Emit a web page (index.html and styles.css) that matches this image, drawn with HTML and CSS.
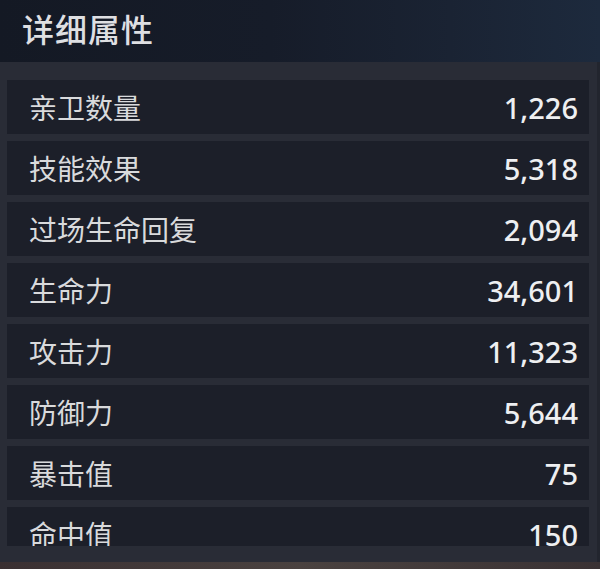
FILE: index.html
```html
<!DOCTYPE html>
<html lang="zh-CN">
<head>
<meta charset="utf-8">
<title>详细属性</title>
<link rel="stylesheet" href="styles.css">
</head>
<body>
<div class="screen">
  <header class="header">
    <h1 class="title">详细属性</h1>
  </header>
  <section class="panel">
    <div class="list">
      <div class="row"><span class="label">亲卫数量</span><span class="value">1,226</span></div>
      <div class="row"><span class="label">技能效果</span><span class="value">5,318</span></div>
      <div class="row"><span class="label">过场生命回复</span><span class="value">2,094</span></div>
      <div class="row"><span class="label">生命力</span><span class="value">34,601</span></div>
      <div class="row"><span class="label">攻击力</span><span class="value">11,323</span></div>
      <div class="row"><span class="label">防御力</span><span class="value">5,644</span></div>
      <div class="row"><span class="label">暴击值</span><span class="value">75</span></div>
      <div class="row"><span class="label">命中值</span><span class="value">150</span></div>
    </div>
  </section>
  <div class="bottom"></div>
</div>
</body>
</html>
```
FILE: styles.css
```css
* { box-sizing: border-box; }
html, body {
  margin: 0;
  padding: 0;
  background: #3b3436;
}
.screen {
  width: 600px;
  height: 569px;
  display: flex;
  flex-direction: column;
  overflow: hidden;
  font-family: "Noto Sans CJK SC", "Noto Sans", sans-serif;
}
.header {
  height: 62px;
  flex: 0 0 62px;
  display: flex;
  align-items: center;
  padding-left: 22px;
  background: linear-gradient(90deg, #141924 0%, #161c29 45%, #1a2333 75%, #1d2a3d 100%);
}
.title {
  margin: 0;
  font-size: 32px;
  font-weight: 500;
  color: #dedfe2;
  letter-spacing: 1px;
  line-height: 1;
  margin-top: -7px;
}
.panel {
  height: 500px;
  flex: 0 0 500px;
  background: #292c36;
  padding: 18px 8px 16px 7px;
  border-right: 3px solid #22252e;
}
.list {
  height: 466px;
  overflow: hidden;
  display: flex;
  flex-direction: column;
  gap: 7px;
}
.row {
  flex: 0 0 54px;
  height: 54px;
  background: #1c1f29;
  display: flex;
  align-items: center;
  justify-content: space-between;
  padding: 0 11px 0 22px;
}
.label {
  font-size: 28px;
  color: #d9dadc;
  line-height: 1;
}
.value {
  font-family: "Noto Sans", sans-serif;
  font-size: 29px;
  font-weight: 500;
  color: #eeeff1;
  line-height: 1;
}
.bottom {
  flex: 1;
  background: linear-gradient(90deg, #3a3032, #4a4240 50%, #3a3234);
}
```
